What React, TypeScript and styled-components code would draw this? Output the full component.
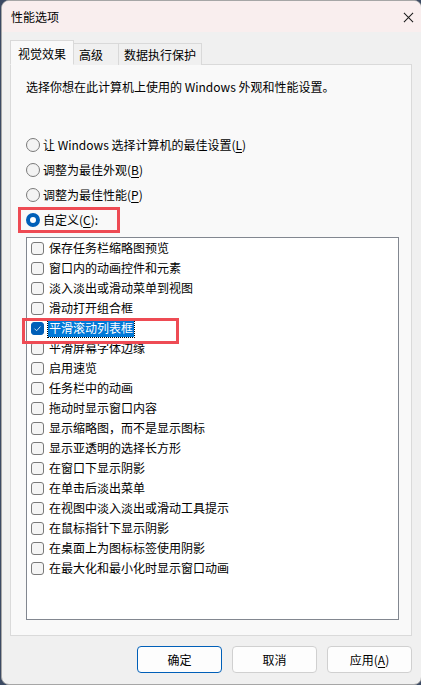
import React from 'react'
import styled, { createGlobalStyle } from 'styled-components'

const effects = [
  '保存任务栏缩略图预览',
  '窗口内的动画控件和元素',
  '淡入淡出或滑动菜单到视图',
  '滑动打开组合框',
  '平滑滚动列表框',
  '平滑屏幕字体边缘',
  '启用速览',
  '任务栏中的动画',
  '拖动时显示窗口内容',
  '显示缩略图，而不是显示图标',
  '显示亚透明的选择长方形',
  '在窗口下显示阴影',
  '在单击后淡出菜单',
  '在视图中淡入淡出或滑动工具提示',
  '在鼠标指针下显示阴影',
  '在桌面上为图标标签使用阴影',
  '在最大化和最小化时显示窗口动画'
]

const CHECKED = 4

const radios = [
  { label: '让 Windows 选择计算机的最佳设置', key: 'L' },
  { label: '调整为最佳外观', key: 'B' },
  { label: '调整为最佳性能', key: 'P' },
  { label: '自定义', key: 'C', suffix: ':' }
]

const tabs = [
  { label: '视觉效果', width: 64 },
  { label: '高级', width: 45 },
  { label: '数据执行保护', width: 83 }
]

export default function App() {
  return (
    <>
      <GlobalStyle />
      <Window>
        <TitleBar>
          <span>性能选项</span>
          <CloseIcon viewBox='0 0 12 12'>
            <path d='M1 1 L11 11 M11 1 L1 11' stroke='#1a1a1a' strokeWidth='1.1' fill='none' />
          </CloseIcon>
        </TitleBar>

        <Body>
          <Tabs>
            {tabs.map((t, i) => (
              <Tab key={t.label} $active={i === 0} $width={t.width}>
                {t.label}
              </Tab>
            ))}
          </Tabs>

          <Panel>
            <Intro>选择你想在此计算机上使用的 Windows 外观和性能设置。</Intro>

            <RadioGroup>
              {radios.map((r, i) => {
                const selected = i === radios.length - 1
                return (
                  <RadioRow key={r.key}>
                    <RadioCircle $selected={selected} />
                    <span>
                      {r.label}(<u>{r.key}</u>){r.suffix}
                    </span>
                    {selected && <Marker $width={102} $left={-8} />}
                  </RadioRow>
                )
              })}
            </RadioGroup>

            <ListBox>
              {effects.map((label, i) => (
                <CheckRow key={label}>
                  <CheckBox $checked={i === CHECKED}>
                    {i === CHECKED && (
                      <svg viewBox='0 0 12 12' width='9' height='9'>
                        <path d='M2 6.2 L4.8 9 L10 3.2' stroke='#fff' strokeWidth='1' fill='none' />
                      </svg>
                    )}
                  </CheckBox>
                  <CheckLabel $focused={i === CHECKED}>{label}</CheckLabel>
                  {i === CHECKED && <Marker $width={157} $left={-5} />}
                </CheckRow>
              ))}
            </ListBox>
          </Panel>

          <Footer>
            <Button $primary>确定</Button>
            <Button>取消</Button>
            <Button>
              应用(<u>A</u>)
            </Button>
          </Footer>
        </Body>
      </Window>
    </>
  )
}

const GlobalStyle = createGlobalStyle`
  html, body {
    margin: 0;
    padding: 0;
    background: #3c4a63;
  }
  body {
    font-family: "Noto Sans CJK SC", "Noto Sans", sans-serif;
    font-size: 12px;
    color: #1a1a1a;
  }
  u {
    text-underline-offset: 2px;
  }
`

const Window = styled.div`
  width: 419px;
  height: 683px;
  margin-left: 1px;
  border: 1px solid #a6a6a6;
  border-radius: 8px;
  overflow: hidden;
  display: flex;
  flex-direction: column;
  background: #f0f0f0;
`

const TitleBar = styled.div`
  height: 31px;
  flex-shrink: 0;
  display: flex;
  align-items: center;
  justify-content: space-between;
  padding: 0 7px 0 9px;
  background: #f9eeee;
  font-size: 12px;
  color: #000;
`

const CloseIcon = styled.svg`
  width: 11px;
  height: 11px;
  margin-top: 1px;
`

const Body = styled.div`
  flex: 1;
  display: flex;
  flex-direction: column;
  padding: 8px 9px 0 8px;
`

const Tabs = styled.div`
  display: flex;
  align-items: flex-end;
  height: 25px;
  position: relative;
  z-index: 1;
`

const Tab = styled.div<{ $active?: boolean; $width: number }>`
  width: ${({ $width }) => $width}px;
  height: ${({ $active }) => ($active ? 25 : 22)}px;
  box-sizing: border-box;
  padding: ${({ $active }) => ($active ? '1px 0 0 7px' : '0 0 0 5px')};
  white-space: nowrap;
  display: flex;
  align-items: center;
  border: 1px solid #d9d9d9;
  border-bottom: ${({ $active }) => ($active ? '1px solid #f9f9f9' : 'none')};
  background: ${({ $active }) => ($active ? '#f9f9f9' : '#f0f0f0')};
  color: #000;
  & + & {
    border-left: none;
  }
`

const Panel = styled.div`
  height: 572px;
  box-sizing: border-box;
  margin-top: -1px;
  border: 1px solid #dadada;
  background: #f9f9f9;
  padding: 13px 12px 0 15px;
  display: flex;
  flex-direction: column;
`

const Intro = styled.div`
  line-height: 18px;
  color: #000;
`

const RadioGroup = styled.div`
  margin-top: 36px;
  display: flex;
  flex-direction: column;
`

const RadioRow = styled.div`
  position: relative;
  height: 25px;
  display: flex;
  align-items: center;
  gap: 3px;
  color: #000;
`

const RadioCircle = styled.div<{ $selected?: boolean }>`
  width: 14px;
  height: 14px;
  box-sizing: border-box;
  border-radius: 50%;
  flex-shrink: 0;
  border: ${({ $selected }) => ($selected ? '4px solid #005fb8' : '1px solid #7a7a7a')};
  background: ${({ $selected }) => ($selected ? '#ffffff' : '#f3f3f3')};
`

const Marker = styled.div<{ $width: number; $left: number }>`
  position: absolute;
  top: 0;
  left: ${({ $left }) => $left}px;
  width: ${({ $width }) => $width}px;
  height: 26px;
  box-sizing: border-box;
  border: 3px solid #ee4b54;
  pointer-events: none;
  z-index: 2;
`

const ListBox = styled.div`
  margin-top: 5px;
  width: 373px;
  height: 383px;
  box-sizing: border-box;
  border: 1px solid #828790;
  background: #ffffff;
  display: flex;
  flex-direction: column;
`

const CheckRow = styled.div`
  position: relative;
  height: 20px;
  flex-shrink: 0;
  display: flex;
  align-items: center;
  padding-left: 4px;
  gap: 5px;
  color: #000;
`

const CheckBox = styled.div<{ $checked?: boolean }>`
  width: 13px;
  height: 13px;
  box-sizing: border-box;
  border-radius: 3px;
  flex-shrink: 0;
  display: flex;
  align-items: center;
  justify-content: center;
  border: 1px solid ${({ $checked }) => ($checked ? '#005fb8' : '#7a7a7a')};
  background: ${({ $checked }) => ($checked ? '#005fb8' : '#f5f5f5')};
`

const CheckLabel = styled.span<{ $focused?: boolean }>`
  line-height: 18px;
  padding: 0 1px;
  margin-left: -1px;
  background: ${({ $focused }) => ($focused ? '#0078d7' : 'transparent')};
  color: ${({ $focused }) => ($focused ? '#ffffff' : '#000')};
  outline: ${({ $focused }) => ($focused ? '1px dotted #000' : 'none')};
`

const Footer = styled.div`
  display: flex;
  justify-content: flex-end;
  gap: 10px;
  margin-top: 10px;
`

const Button = styled.div<{ $primary?: boolean }>`
  width: 85px;
  height: 27px;
  box-sizing: border-box;
  border-radius: 4px;
  display: flex;
  align-items: center;
  justify-content: center;
  background: #fdfdfd;
  border: 1px solid ${({ $primary }) => ($primary ? '#005fb8' : '#d0d0d0')};
  color: #000;
`
